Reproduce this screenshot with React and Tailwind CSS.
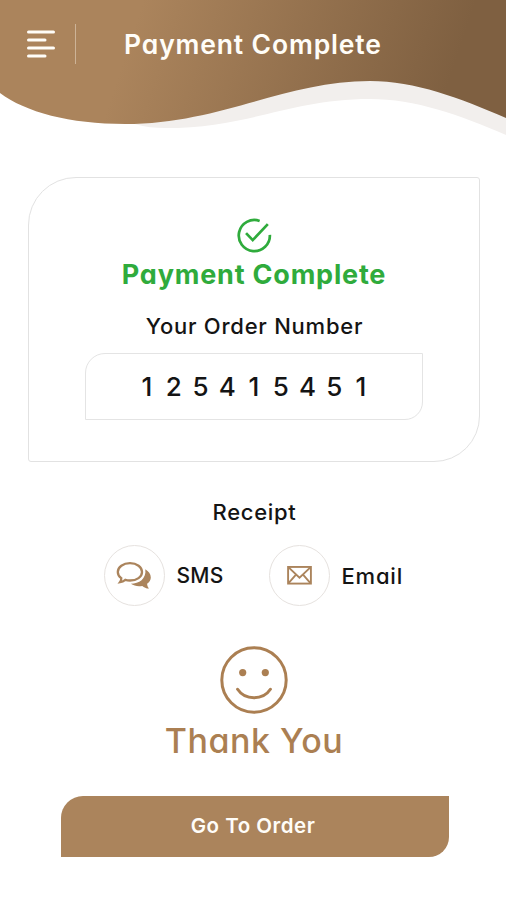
const HeaderWave = () => (
    <svg className="absolute inset-0" width="506" height="140" viewBox="0 0 506 140" fill="none">
        <defs>
            <linearGradient id="header-fill" x1="130" y1="40" x2="430" y2="140" gradientUnits="userSpaceOnUse">
                <stop offset="0" stopColor="#ab845c" />
                <stop offset="1" stopColor="#7f6041" />
            </linearGradient>
        </defs>
        <path d="M110 110C125 124 145 128 165 128C250 128 290 99 370 99C415 99 460 115 506 135V60H110Z" fill="#f2efed" />
        <path d="M0 0H506V118C460 98 415 81 370 81C285 81 220 124 125 124C70 124 25 112 0 93Z" fill="url(#header-fill)" />
    </svg>
);

const MenuIcon = () => (
    <svg width="28" height="28" viewBox="0 0 28 28" stroke="#fffdf8" strokeWidth="3" strokeLinecap="round">
        <path d="M1.5 2H26.5M1.5 10H18M1.5 18H26.5M1.5 26H18" />
    </svg>
);

const CheckIcon = () => (
    <svg width="35" height="35" viewBox="0 0 36 36" fill="none" stroke="#2fab3c" strokeWidth="2.8">
        <path d="M23.3 3A16 16 0 1 0 33.8 17.3" />
        <path d="M9.3 15.5L16.2 22.7L31.7 6.3" />
    </svg>
);

const ChatIcon = () => (
    <svg width="36" height="30" viewBox="0 0 36 30" fill="none">
        <path
            d="M14 2.2C20.8 2.2 26 6 26 11S20.8 19.5 14 19.5C12.2 19.5 10.7 19.3 9.3 18.8C7.7 20.2 5.8 21 4 21.2C4.9 20 5.4 18.6 5.3 17.1C3 15.6 1.8 13.5 1.8 11C1.8 6 7.2 2.2 14 2.2Z"
            stroke="#ab845c"
            strokeWidth="2.3"
        />
        <path
            d="M29.3 8.3C32.6 10.3 34.8 13.2 34.8 16.4C34.8 18.9 33.4 21.2 31.1 22.8C31.2 24.7 31.9 26.3 33 27.6C30.2 27.4 28 26.4 26.3 24.9C22.4 25.7 18.1 25.1 14.9 22.8C22.9 22.8 30.6 18 29.3 8.3Z"
            fill="#ab845c"
        />
    </svg>
);

const MailIcon = () => (
    <svg width="25" height="19" viewBox="0 0 26 20" fill="none" stroke="#ab845c" strokeWidth="2">
        <rect x="1" y="1" width="24" height="17.5" />
        <path d="M1.5 1.5L13 12.3L24.5 1.5M1.5 18L9.3 9M24.5 18L16.7 9" />
    </svg>
);

const SmileIcon = () => (
    <svg width="68" height="68" viewBox="0 0 68 68" fill="none" stroke="#ab7f52" strokeWidth="3">
        <circle cx="34" cy="34" r="32.2" />
        <path d="M17.6 43.3C25 54.6 43 54.6 50.4 43.3" strokeLinecap="round" />
        <circle cx="22.7" cy="26.6" r="3.6" fill="#ab7f52" stroke="none" />
        <circle cx="45.3" cy="26.6" r="3.6" fill="#ab7f52" stroke="none" />
    </svg>
);

const ReceiptOption = ({ icon, label, className }) => (
    <button type="button" className="flex items-center gap-3">
        <span className="flex h-[61px] w-[61px] items-center justify-center rounded-full border border-[#e6e2df]">{icon}</span>
        <span className={`whitespace-nowrap text-left font-medium leading-8 ${className}`}>{label}</span>
    </button>
);

const App = () => {
    const orderNumber = '125415451';

    return (
        <div className="h-[900px] w-[506px] overflow-hidden bg-white font-['Inter',sans-serif] text-[#141414] [font-feature-settings:'cv11']">
            <header className="relative h-[140px]">
                <HeaderWave />
                <div className="relative flex items-center pl-[27px] pt-6">
                    <MenuIcon />
                    <div className="ml-5 h-10 w-px bg-[#cdb397]" />
                    <h1 className="ml-12 whitespace-nowrap text-[26.5px] font-semibold leading-10 tracking-[0.85px] text-[#fffdf8]">
                        Payment Complete
                    </h1>
                </div>
            </header>

            <main className="flex flex-col items-center">
                {/* Order summary */}
                <section className="ml-0.5 mt-[37px] flex h-[285px] w-[452px] flex-col items-center rounded-bl-[3px] rounded-br-[46px] rounded-tl-[48px] rounded-tr-[3px] border border-[#e2e2e2] pt-10">
                    <CheckIcon />
                    <h2 className="mt-0.5 whitespace-nowrap text-[27px] font-bold leading-10 tracking-[0.8px] text-[#2fab3c]">
                        Payment Complete
                    </h2>
                    <p className="ml-px mt-[15px] whitespace-nowrap text-[22px] font-medium leading-8 tracking-[0.75px]">Your Order Number</p>
                    <div className="mt-[11px] flex h-[67px] w-[338px] items-center justify-center rounded-br-[18px] rounded-tl-[20px] border border-[#e4e4e4]">
                        <div className="flex w-[238px] justify-between text-[26px] font-medium leading-8">
                            {orderNumber.split('').map((digit, i) => (
                                <span key={i} className="w-6 text-center">{digit}</span>
                            ))}
                        </div>
                    </div>
                </section>

                {/* Receipt options */}
                <h3 className="ml-[3px] mt-[34px] text-[22px] font-medium leading-8 tracking-[0.7px]">Receipt</h3>
                <div className="mt-[17px] flex w-[301px] justify-between pl-px">
                    <ReceiptOption icon={<ChatIcon />} label="SMS" className="w-[47px] text-[21px] tracking-[0.2px]" />
                    <ReceiptOption icon={<MailIcon />} label="Email" className="w-[62px] text-[22px] tracking-[0.8px]" />
                </div>

                <div className="ml-0.5 mt-10 flex flex-col items-center text-[#ab7f52]">
                    <SmileIcon />
                    <p className="mt-0.5 whitespace-nowrap text-[34px] font-medium leading-[50px] tracking-[0.5px]">Thank You</p>
                </div>

                <button
                    type="button"
                    className="ml-1 mt-[30px] h-[61px] w-[388px] rounded-br-[20px] rounded-tl-[22px] bg-[#ab845c] pr-1 text-[20.5px] font-semibold tracking-[0.5px] text-[#fffdf8]"
                >
                    Go To Order
                </button>
            </main>
        </div>
    );
};

export default App;
